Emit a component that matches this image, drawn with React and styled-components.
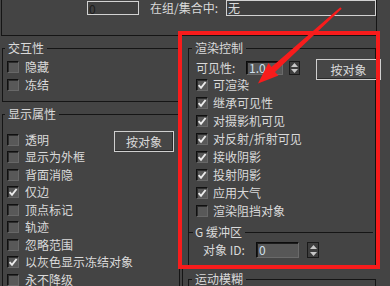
import React from 'react';
import styled, { createGlobalStyle } from 'styled-components';

const ui = {
  bg: '#444444',
  line: '#151515',
  text: '#dadada',
  field: '#585858',
  red: '#f81c1c',
};

const GlobalStyle = createGlobalStyle`
  html, body {
    margin: 0;
    padding: 0;
    background: ${ui.bg};
  }
  body {
    font-family: "Noto Sans CJK SC", "Noto Sans", sans-serif;
  }
`;

const Screen = styled.div`
  position: relative;
  width: 390px;
  height: 286px;
  overflow: hidden;
  background: ${ui.bg};
  color: ${ui.text};
  font-size: 12px;
  line-height: 14px;
`;

const TopPanel = styled.div`
  margin-left: 1px;
  width: 376px;
  height: 36px;
  box-sizing: border-box;
  border: 1px solid ${ui.line};
  border-top: none;
  display: flex;
  align-items: flex-start;
  padding-left: 85px;
`;

const FlatInput = styled.div`
  box-sizing: border-box;
  width: ${p => p.$w}px;
  height: ${p => p.$h}px;
  margin-top: ${p => p.$top || 0}px;
  margin-left: ${p => p.$left || '0px'};
  border: 1px solid #d2d2d2;
  background: #3f3f3f;
  color: ${p => p.$dark ? '#1c1c1c' : ui.text};
  padding-left: 1px;
  font-size: 12px;
  line-height: 13px;
`;

const TopLabel = styled.span`
  margin: 1px 0 0 11px;
  white-space: nowrap;
`;

const Columns = styled.div`
  display: flex;
  align-items: flex-start;
`;

const LeftColumn = styled.div`
  width: 180px;
  flex: none;
`;

const RightColumn = styled.div`
  width: 198px;
  flex: none;
  display: flex;
  flex-direction: column;
`;

const Group = styled.fieldset`
  margin: ${p => p.$top}px 0 0 ${p => p.$left}px;
  padding: 0;
  min-width: 0;
  width: ${p => p.$width}px;
  box-sizing: border-box;
  border: 1px solid ${ui.line};
`;

const Legend = styled.legend`
  margin-left: ${p => p.$indent}px;
  padding: 0 3px;
  font-size: 12px;
  line-height: 14px;
  color: ${ui.text};
`;

const GroupBody = styled.div`
  padding: ${p => p.$pad};
`;

const Row = styled.div`
  display: flex;
  align-items: center;
  height: ${p => p.$h || 18}px;
  gap: ${p => p.$gap || 6}px;
  white-space: nowrap;
`;

const Box = styled.span`
  flex: none;
  width: 12px;
  height: 12px;
  box-sizing: border-box;
  background: ${ui.field};
  border: 1px solid;
  border-color: #101010 #686868 #686868 #101010;
  box-shadow: inset 1px 1px 0 #2c2c2c;
  display: flex;
  align-items: center;
  justify-content: center;
`;

const Button = styled.div`
  flex: none;
  align-self: flex-start;
  box-sizing: border-box;
  width: ${p => p.$w}px;
  height: 21px;
  margin-left: ${p => p.$left || 'auto'};
  border: 1px solid #cfcfcf;
  box-shadow: inset -1px -1px 0 #2a2a2a;
  background: #464646;
  display: flex;
  align-items: center;
  justify-content: center;
  font-size: 12px;
`;

const FieldLabel = styled.span`
  width: ${p => p.$w}px;
  flex: none;
`;

const SpinField = styled.div`
  flex: none;
  box-sizing: border-box;
  width: ${p => p.$w}px;
  height: ${p => p.$h}px;
  background: #575757;
  border: 1px solid;
  border-color: #0c0c0c #6a6a6a #6a6a6a #0c0c0c;
  box-shadow: inset 1px 1px 0 #1c1c1c;
  color: #cfe0ee;
  padding-left: 2px;
  font-size: 12px;
  line-height: ${p => p.$h - 2}px;
`;

const SpinArrows = styled.div`
  flex: none;
  box-sizing: border-box;
  width: ${p => p.$w}px;
  height: ${p => p.$h}px;
  margin-left: ${p => p.$gap || 0}px;
  background: #3e3e3e;
  border: 1px solid #1a1a1a;
  display: flex;
  flex-direction: column;
  align-items: center;
  justify-content: space-around;
`;

const SubHeader = styled.div`
  display: flex;
  align-items: center;
  height: 14px;
  margin: 5px 0 0 -7px;
  &::before {
    content: '';
    width: 4px;
    border-top: 1px solid ${ui.line};
  }
  &::after {
    content: '';
    flex: 1;
    margin-right: 2px;
    border-top: 1px solid ${ui.line};
  }
`;

const SubTitle = styled.span`
  padding: 0 3px 0 2px;
`;

const IdRow = styled(Row)`
  margin-top: 3px;
  padding-left: 7px;
`;

const MotionPanel = styled.div`
  margin: 2px 0 0 2px;
  height: 40px;
  border-left: 1px solid ${ui.line};
  border-top: 1px solid ${ui.line};
`;

const Highlight = styled.div`
  position: absolute;
  left: 178px;
  top: 31px;
  width: 202px;
  height: 238px;
  box-sizing: border-box;
  border: 4px solid ${ui.red};
  pointer-events: none;
`;

const ArrowLayer = styled.svg`
  position: absolute;
  left: 0;
  top: 0;
  pointer-events: none;
`;

const Check = () => (
  <svg width="10" height="10" viewBox="0 0 10 10">
    <path d="M1.6 5.2 L4 7.8 L8.6 2" fill="none" stroke="#ececec" strokeWidth="1.9" />
  </svg>
);

const Tri = ({ up }) => (
  <svg width="7" height="4" viewBox="0 0 7 4">
    <path d={up ? 'M0 4 L3.5 0 L7 4 Z' : 'M0 0 L7 0 L3.5 4 Z'} fill="#c8c8c8" />
  </svg>
);

const CheckItem = ({ label, on, gap, h }) => (
  <Row $gap={gap} $h={h}>
    <Box>{on && <Check />}</Box>
    <span>{label}</span>
  </Row>
);

const displayRows = [
  ['显示为外框', false],
  ['背面消隐', false],
  ['仅边', true],
  ['顶点标记', false],
  ['轨迹', false],
  ['忽略范围', false],
  ['以灰色显示冻结对象', true],
  ['永不降级', false],
];

const renderRows = [
  ['可渲染', true],
  ['继承可见性', true],
  ['对摄影机可见', true],
  ['对反射/折射可见', true],
  ['接收阴影', true],
  ['投射阴影', true],
  ['应用大气', true],
  ['渲染阻挡对象', false],
];

export default function App() {
  return (
    <Screen>
      <GlobalStyle />
      <TopPanel>
        <FlatInput $w={52} $h={14} $top={1} $dark>0</FlatInput>
        <TopLabel>在组/集合中:</TopLabel>
        <FlatInput $w={150} $h={16} $left="auto">无</FlatInput>
      </TopPanel>

      <Columns>
        <LeftColumn>
          <Group $top={5} $left={2} $width={178}>
            <Legend $indent={2}>交互性</Legend>
            <GroupBody $pad="3px 0 7px 4px">
              <CheckItem label="隐藏" />
              <CheckItem label="冻结" />
            </GroupBody>
          </Group>

          <Group $top={5} $left={2} $width={178}>
            <Legend $indent={2}>显示属性</Legend>
            <GroupBody $pad="10px 5px 20px 4px">
              <Row $h={17.5}>
                <Box />
                <span>透明</span>
                <Button $w={60}>按对象</Button>
              </Row>
              {displayRows.map(([label, on]) => (
                <CheckItem key={label} label={label} on={on} h={17.5} />
              ))}
            </GroupBody>
          </Group>
        </LeftColumn>

        <RightColumn>
          <Group $top={5} $left={8} $width={188}>
            <Legend $indent={3}>渲染控制</Legend>
            <GroupBody $pad="4px 0 7px 7px">
              <Row $h={17} $gap={0}>
                <FieldLabel $w={44}>可见性:</FieldLabel>
                <SpinField $w={37} $h={14}>1.0</SpinField>
                <SpinArrows $w={11} $h={14}>
                  <Tri up />
                  <Tri />
                </SpinArrows>
                <Button $w={65} $left="10px">按对象</Button>
              </Row>
              {renderRows.map(([label, on]) => (
                <CheckItem key={label} label={label} on={on} gap={5} />
              ))}
              <SubHeader>
                <SubTitle>G 缓冲区</SubTitle>
              </SubHeader>
              <IdRow $h={16} $gap={0}>
                <FieldLabel $w={47}>对象 ID:</FieldLabel>
                <SpinField $w={43} $h={16}>0</SpinField>
                <SpinArrows $w={12} $h={16} $gap={2}>
                  <Tri up />
                  <Tri />
                </SpinArrows>
              </IdRow>
            </GroupBody>
          </Group>

          <MotionPanel>
            <Group $top={3} $left={5} $width={188}>
              <Legend $indent={3}>运动模糊</Legend>
              <GroupBody $pad="20px 0 0 0" />
            </Group>
          </MotionPanel>
        </RightColumn>
      </Columns>

      <Highlight />
      <ArrowLayer width="390" height="286" viewBox="0 0 390 286">
        <polygon
          points="340.3,7.3 341.7,8.7 275,72 278.5,75.5 258,83.5 268.5,63 271.5,67"
          fill={ui.red}
        />
      </ArrowLayer>
    </Screen>
  );
}
